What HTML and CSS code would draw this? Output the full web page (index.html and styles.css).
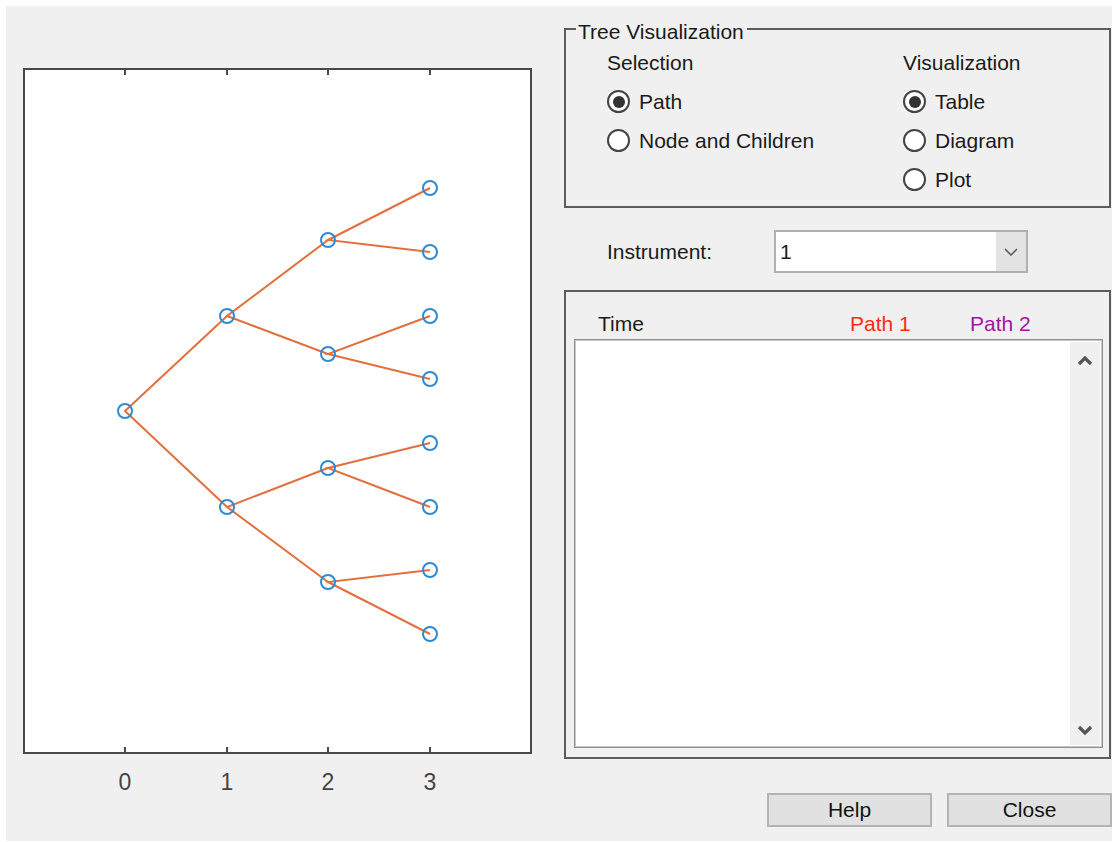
FILE: index.html
```html
<!DOCTYPE html>
<html>
<head>
  <title>Tree Viewer</title>
  <link rel="stylesheet" href="styles.css">
</head>
<body>
  <div class="figure">
    <!-- tree plot -->
    <svg class="plot" viewBox="6 6 558 835" width="558" height="835">
      <rect x="24" y="69" width="507" height="684" fill="#fff" stroke="#4a4a4a" stroke-width="2"/>
      <g stroke="#4a4a4a" stroke-width="2">
        <line x1="125" y1="69" x2="125" y2="75"/>
        <line x1="227" y1="69" x2="227" y2="75"/>
        <line x1="328" y1="69" x2="328" y2="75"/>
        <line x1="430" y1="69" x2="430" y2="75"/>
        <line x1="125" y1="753" x2="125" y2="747"/>
        <line x1="227" y1="753" x2="227" y2="747"/>
        <line x1="328" y1="753" x2="328" y2="747"/>
        <line x1="430" y1="753" x2="430" y2="747"/>
      </g>
      <g class="ticks">
        <text x="125" y="790">0</text>
        <text x="227" y="790">1</text>
        <text x="328" y="790">2</text>
        <text x="430" y="790">3</text>
      </g>
      <g stroke="#e2703f" stroke-width="2" fill="none">
        <polyline points="430,188 328,240 430,252"/>
        <polyline points="430,316 328,354 430,379"/>
        <polyline points="430,443 328,468 430,507"/>
        <polyline points="430,570 328,582 430,634"/>
        <polyline points="328,240 227,316 328,354"/>
        <polyline points="328,468 227,507 328,582"/>
        <polyline points="227,316 125,411 227,507"/>
      </g>
      <g stroke="#2f8ad2" stroke-width="2" fill="none">
        <circle cx="125" cy="411" r="7"/>
        <circle cx="227" cy="316" r="7"/>
        <circle cx="227" cy="507" r="7"/>
        <circle cx="328" cy="240" r="7"/>
        <circle cx="328" cy="354" r="7"/>
        <circle cx="328" cy="468" r="7"/>
        <circle cx="328" cy="582" r="7"/>
        <circle cx="430" cy="188" r="7"/>
        <circle cx="430" cy="252" r="7"/>
        <circle cx="430" cy="316" r="7"/>
        <circle cx="430" cy="379" r="7"/>
        <circle cx="430" cy="443" r="7"/>
        <circle cx="430" cy="507" r="7"/>
        <circle cx="430" cy="570" r="7"/>
        <circle cx="430" cy="634" r="7"/>
      </g>
    </svg>

    <div class="controls">
      <div class="panel tree-panel">
        <span class="panel-title">Tree Visualization</span>
        <div class="option-group">
          <div class="group-title">Selection</div>
          <div class="option"><span class="radio checked"></span>Path</div>
          <div class="option"><span class="radio"></span>Node and Children</div>
        </div>
        <div class="option-group">
          <div class="group-title">Visualization</div>
          <div class="option"><span class="radio checked"></span>Table</div>
          <div class="option"><span class="radio"></span>Diagram</div>
          <div class="option"><span class="radio"></span>Plot</div>
        </div>
      </div>

      <div class="instrument-row">
        <span class="instrument-label">Instrument:</span>
        <div class="dropdown">
          <span class="dropdown-value">1</span>
          <span class="dropdown-arrow">
            <svg width="14" height="8" viewBox="0 0 14 8"><polyline points="1,1 7,7 13,1" fill="none" stroke="#555" stroke-width="1.5"/></svg>
          </span>
        </div>
      </div>

      <div class="panel table-panel">
        <div class="table-head">
          <span class="col-time">Time</span>
          <span class="col-path1">Path 1</span>
          <span class="col-path2">Path 2</span>
        </div>
        <div class="listbox">
          <div class="list-body"></div>
          <div class="scrollbar">
            <svg width="16" height="10" viewBox="0 0 16 10"><polyline points="2,8 8,2 14,8" fill="none" stroke="#555" stroke-width="3.2"/></svg>
            <svg width="16" height="10" viewBox="0 0 16 10"><polyline points="2,2 8,8 14,2" fill="none" stroke="#555" stroke-width="3.2"/></svg>
          </div>
        </div>
      </div>

      <div class="button-row">
        <button class="btn">Help</button>
        <button class="btn">Close</button>
      </div>
    </div>
  </div>
</body>
</html>
```

FILE: styles.css
```css
body {
  margin: 0;
  background: #fff;
  font-family: "Liberation Sans", Arial, sans-serif;
  font-size: 21px;
  color: #1a1a1a;
}
.figure {
  margin: 6px 0 0 6px;
  width: 1106px;
  height: 835px;
  background: #f0f0f0;
  display: flex;
  overflow: hidden;
}
.plot {
  display: block;
  flex: none;
}
.ticks text {
  font-family: "Liberation Sans", Arial, sans-serif;
  font-size: 23px;
  fill: #444;
  text-anchor: middle;
}
.controls {
  width: 548px;
  flex: none;
  display: flex;
  flex-direction: column;
}
.panel {
  border: 2px solid #5c5c5c;
  width: 547px;
  box-sizing: border-box;
  position: relative;
}
.panel-title {
  position: absolute;
  top: -10px;
  left: 10px;
  padding: 0 3px 0 2px;
  background: #f0f0f0;
  line-height: 24px;
}
.tree-panel {
  margin-top: 22px;
  height: 180px;
  padding: 13px 0 0 41px;
  display: flex;
}
.option-group {
  flex: none;
  width: 296px;
}
.option-group + .option-group {
  width: auto;
}
.group-title,
.option {
  height: 39px;
  display: flex;
  align-items: center;
}
.radio {
  width: 23px;
  height: 23px;
  box-sizing: border-box;
  border: 2px solid #444;
  border-radius: 50%;
  background: #fff;
  margin-right: 9px;
  display: flex;
  align-items: center;
  justify-content: center;
}
.radio.checked::after {
  content: "";
  width: 12px;
  height: 12px;
  border-radius: 50%;
  background: #333;
}
.instrument-row {
  margin-top: 22px;
  height: 43px;
  display: flex;
  align-items: center;
  padding-left: 43px;
}
.instrument-label {
  width: 167px;
}
.dropdown {
  width: 254px;
  height: 43px;
  box-sizing: border-box;
  border: 2px solid #b0b0b0;
  background: #fff;
  display: flex;
}
.dropdown-value {
  flex: 1;
  padding-left: 4px;
  line-height: 39px;
}
.dropdown-arrow {
  width: 30px;
  background: #e3e3e3;
  display: flex;
  align-items: center;
  justify-content: center;
}
.table-panel {
  margin-top: 17px;
  height: 469px;
  padding: 20px 0 0 8px;
}
.table-head {
  display: flex;
  height: 24px;
  line-height: 24px;
  padding-left: 24px;
  margin-bottom: 3px;
}
.col-time {
  width: 252px;
}
.col-path1 {
  width: 120px;
  color: #ff2a14;
}
.col-path2 {
  color: #a2169e;
}
.listbox {
  width: 529px;
  height: 409px;
  box-sizing: border-box;
  border: 1px solid #8f8f8f;
  box-shadow: inset 0 0 0 1px #c9c9c9;
  background: #fff;
  display: flex;
  padding: 2px;
}
.list-body {
  flex: 1;
}
.scrollbar {
  width: 30px;
  background: #f0f0f0;
  display: flex;
  flex-direction: column;
  justify-content: space-between;
  align-items: center;
  padding: 14px 0 10px;
}
.button-row {
  margin-top: 34px;
  display: flex;
  gap: 15px;
  padding-left: 203px;
}
.btn {
  flex: none;
  width: 165px;
  height: 34px;
  border: 2px solid #b4b4b4;
  background: #e1e1e1;
  font-family: "Liberation Sans", Arial, sans-serif;
  font-size: 21px;
  color: #111;
  padding: 0;
}
```
